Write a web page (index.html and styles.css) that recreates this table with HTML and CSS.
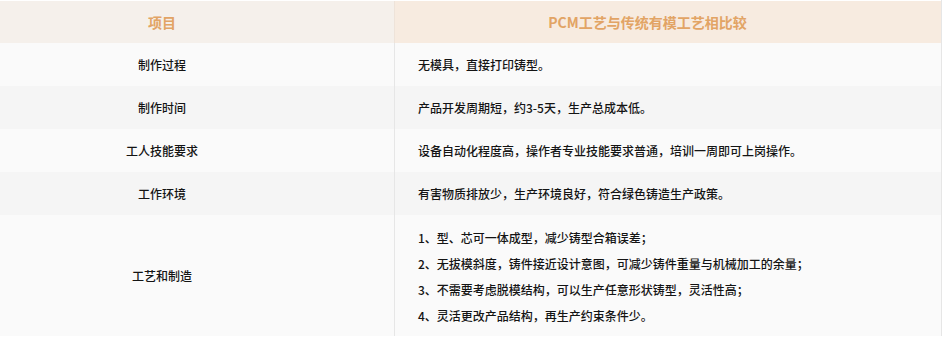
FILE: index.html
```html
<!DOCTYPE html>
<html lang="zh-CN">
<head>
<meta charset="utf-8">
<link rel="stylesheet" href="styles.css">
</head>
<body>
<div class="wrap">
<table class="cmp">
  <thead>
    <tr>
      <th class="c-item">项目</th>
      <th class="c-desc">PCM工艺与传统有模工艺相比较</th>
    </tr>
  </thead>
  <tbody>
    <tr class="odd">
      <td class="c-item">制作过程</td>
      <td class="c-desc">无模具，直接打印铸型。</td>
    </tr>
    <tr class="even">
      <td class="c-item">制作时间</td>
      <td class="c-desc">产品开发周期短，约3-5天，生产总成本低。</td>
    </tr>
    <tr class="odd">
      <td class="c-item">工人技能要求</td>
      <td class="c-desc">设备自动化程度高，操作者专业技能要求普通，培训一周即可上岗操作。</td>
    </tr>
    <tr class="even">
      <td class="c-item">工作环境</td>
      <td class="c-desc">有害物质排放少，生产环境良好，符合绿色铸造生产政策。</td>
    </tr>
    <tr class="odd tall">
      <td class="c-item">工艺和制造</td>
      <td class="c-desc">
        <p>1、型、芯可一体成型，减少铸型合箱误差；</p>
        <p>2、无拔模斜度，铸件接近设计意图，可减少铸件重量与机械加工的余量；</p>
        <p>3、不需要考虑脱模结构，可以生产任意形状铸型，灵活性高；</p>
        <p>4、灵活更改产品结构，再生产约束条件少。</p>
      </td>
    </tr>
  </tbody>
</table>
</div>
</body>
</html>
```

FILE: styles.css
```css
html, body {
  margin: 0;
  padding: 0;
  background: #ffffff;
}

.wrap {
  padding-top: 1px;
  width: 941px;
  border-right: 1px solid #e6e6e6;
}

.cmp {
  width: 941px;
  border-collapse: collapse;
  table-layout: fixed;
  font-family: "Microsoft YaHei", "Noto Sans CJK SC", "Liberation Sans", sans-serif;
  font-size: 12px;
  font-weight: 500;
  color: #141414;
}

.cmp th,
.cmp td {
  padding: 0;
  vertical-align: middle;
}

.cmp th {
  height: 42px;
  font-size: 14px;
  font-weight: 700;
  color: #e2a465;
}

.cmp th.c-item {
  width: 324px;
  padding-right: 70px;
  text-align: center;
  background: #f5f0eb;
}

.cmp th.c-desc {
  padding-right: 41px;
  text-align: center;
  background: #f7ebe0;
  border-left: 1px solid #eee3d9;
}

.cmp td {
  height: 43px;
}

.cmp td.c-item {
  padding-right: 70px;
  text-align: center;
}

.cmp td.c-desc {
  padding-left: 23px;
  text-align: left;
  border-left: 1px solid #e6e6e6;
}

.odd {
  background: #fafafa;
}

.even {
  background: #f5f5f5;
}

.tall td {
  height: 121px;
}

.tall td.c-desc {
  padding-top: 10px;
  padding-bottom: 7px;
  box-sizing: border-box;
}

.tall p {
  margin: 0;
  line-height: 26px;
}
```
